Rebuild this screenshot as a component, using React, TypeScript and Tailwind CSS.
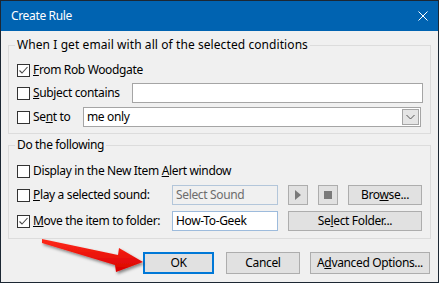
import React from "react";

const Check = ({ checked }: { checked?: boolean }) => (
  <div className="w-[13px] h-[13px] border border-[#333333] bg-white shrink-0 relative">
    {checked && (
      <svg width="11" height="11" viewBox="0 0 11 11" className="absolute left-0 top-0">
        <path d="M1.5 5.5 L4 8 L9.5 2" fill="none" stroke="#4a4a4a" strokeWidth="1.1" />
      </svg>
    )}
  </div>
);

const Btn = ({ children, className = "" }: { children: React.ReactNode; className?: string }) => (
  <div
    className={
      "h-[20px] border border-[#adadad] bg-[#e1e1e1] flex items-center justify-center shrink-0 " + className
    }
  >
    {children}
  </div>
);

export default function App() {
  return (
    <div className="relative w-[439px] h-[283px] bg-[#f0f0f0] border border-[#1c2733] overflow-hidden font-['Noto_Sans',sans-serif] text-[12px] tracking-[-0.35px] text-black leading-[16px]">
      {/* Title bar */}
      <div className="h-[30px] bg-[#0063b1] flex items-center justify-between pl-[10px] pr-[10px] text-white">
        <span className="text-[12px]">Create Rule</span>
        <svg width="10" height="10" viewBox="0 0 10 10">
          <path d="M0.5 0.5 L9.5 9.5 M9.5 0.5 L0.5 9.5" stroke="white" strokeWidth="1" />
        </svg>
      </div>

      <div className="px-[7px]">
        {/* Group 1 */}
        <fieldset className="mt-[6px] border border-[#dcdcdc] pl-[8px] pr-[7px] pb-[6px]">
          <legend className="ml-[-2px] px-[2px] leading-[16px] tracking-[0.08px]">
            When I get email with all of the selected conditions
          </legend>
          <div className="mt-[7px] h-[20px] flex items-center">
            <Check checked />
            <span className="ml-[3px]">
              <u>F</u>rom Rob Woodgate
            </span>
          </div>
          <div className="mt-[3px] h-[20px] flex items-center">
            <Check />
            <span className="ml-[3px] w-[99px]">
              <u>S</u>ubject contains
            </span>
            <div className="flex-1 h-[20px] border border-[#a5a5a5] bg-white" />
          </div>
          <div className="mt-[4px] h-[20px] flex items-center">
            <Check />
            <span className="ml-[3px] w-[50px]">
              Se<u>n</u>t to
            </span>
            <div className="flex-1 mr-[2px] h-[20px] border border-[#a5a5a5] bg-white flex items-center justify-between pl-[3px]">
              <span>me only</span>
              <div className="w-[17px] h-[16px] mr-[1px] border border-[#a5a5a5] bg-[#e5e5e5] flex items-center justify-center">
                <svg width="9" height="6" viewBox="0 0 9 6">
                  <path d="M0.5 1 L4.5 5 L8.5 1" fill="none" stroke="#555" strokeWidth="1" />
                </svg>
              </div>
            </div>
          </div>
        </fieldset>

        {/* Group 2 */}
        <fieldset className="mt-[3px] border border-[#dcdcdc] pl-[8px] pr-[7px] pb-[7px]">
          <legend className="ml-[-2px] px-[2px] leading-[16px]">Do the following</legend>
          <div className="mt-[8px] h-[20px] flex items-center">
            <Check />
            <span className="ml-[3px]">
              Display in the New Item <u>A</u>lert window
            </span>
          </div>
          <div className="mt-[4px] h-[20px] flex items-center">
            <Check />
            <span className="ml-[3px] w-[139px]">
              <u>P</u>lay a selected sound:
            </span>
            <div className="w-[106px] h-[20px] border border-[#b3c6da] bg-[#f0f0f0] flex items-center pl-[3px] text-[#6d6d6d]">
              Select Sound
            </div>
            <Btn className="ml-[10px] w-[20px]">
              <svg width="6" height="10" viewBox="0 0 6 10">
                <path d="M0 0 L6 5 L0 10 Z" fill="#7a7a7a" />
              </svg>
            </Btn>
            <Btn className="ml-[10px] w-[20px]">
              <div className="w-[8px] h-[8px] bg-[#7a7a7a]" />
            </Btn>
            <Btn className="ml-[10px] w-[74px]">
              <span>
                Bro<u>w</u>se...
              </span>
            </Btn>
          </div>
          <div className="mt-[6px] h-[20px] flex items-center">
            <Check checked />
            <span className="ml-[3px] w-[139px]">
              <u>M</u>ove the item to folder:
            </span>
            <div className="w-[106px] h-[20px] border border-[#9dbbdc] bg-white flex items-center pl-[3px]">
              How-To-Geek
            </div>
            <Btn className="ml-[10px] w-[134px]">
              <span>
                Se<u>l</u>ect Folder...
              </span>
            </Btn>
          </div>
        </fieldset>

        {/* Bottom buttons */}
        <div className="mt-[13px] flex justify-end mr-[1px]">
          <div className="w-[71px] h-[22px] border-2 border-[#0078d7] bg-[#e1e1e1] flex items-center justify-center">
            OK
          </div>
          <div className="ml-[12px] w-[74px] h-[22px] border border-[#adadad] bg-[#e1e1e1] flex items-center justify-center">
            Cancel
          </div>
          <div className="ml-[10px] w-[120px] h-[22px] border border-[#adadad] bg-[#e1e1e1] flex items-center justify-center">
            <span>
              A<u>d</u>vanced Options...
            </span>
          </div>
        </div>
      </div>

      {/* Red arrow overlay */}
      <svg
        className="absolute left-0 top-0 pointer-events-none"
        width="439"
        height="283"
        viewBox="0 0 439 283"
      >
        <defs>
          <filter id="sh" x="-20%" y="-50%" width="140%" height="200%">
            <feDropShadow dx="1.5" dy="2" stdDeviation="1.5" floodColor="#000" floodOpacity="0.45" />
          </filter>
          <linearGradient id="rg" x1="0" y1="0" x2="0" y2="1">
            <stop offset="0" stopColor="#ff2a1a" />
            <stop offset="1" stopColor="#d80000" />
          </linearGradient>
        </defs>
        <polygon
          points="41,238 117,254 118,247 142,261 115,271 114,264 41,242"
          fill="url(#rg)"
          filter="url(#sh)"
        />
      </svg>
    </div>
  );
}
